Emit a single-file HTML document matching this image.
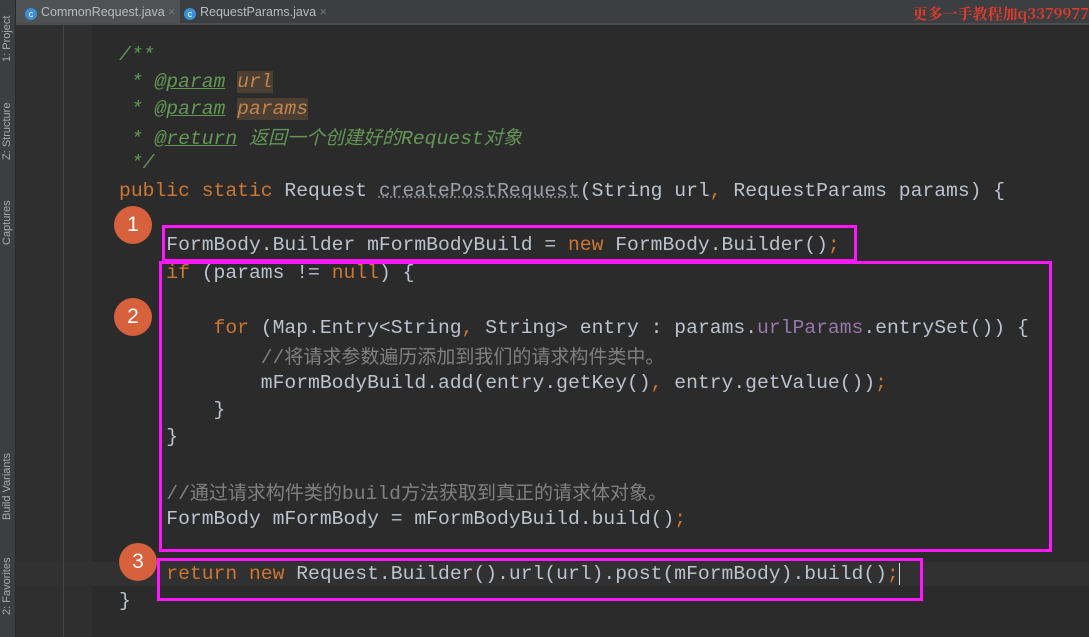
<!DOCTYPE html>
<html><head><meta charset="utf-8"><style>
body{margin:0;width:1089px;height:637px;background:#2b2b2b;overflow:hidden;position:relative;font-family:"Liberation Mono","Noto Sans CJK SC",monospace;}
.strip{position:absolute;left:0;top:0;width:15px;height:637px;background:#3c3f41;border-right:1px solid #2a2a2a}
.tabs{position:absolute;left:16px;top:0;right:0;height:23px;background:#3c3f41;border-bottom:2px solid #4b4e50}
.tab{position:absolute;top:0;height:23px;font:12.5px "Liberation Sans",sans-serif;color:#bbb;line-height:24px;white-space:nowrap}
.tab.act{background:#4e5254}
.ci{display:inline-block;width:12px;height:12px;border-radius:50%;background:#3d8fd6;color:#fff;font-size:9px;line-height:12px;text-align:center;vertical-align:-1px;margin-right:4px}
.gutter{position:absolute;left:16px;top:25px;width:76px;height:612px;background:#2f2f2f}
.gl{position:absolute;left:63px;top:25px;width:1px;height:612px;background:#444}
.hl{position:absolute;left:16px;top:562px;width:1073px;height:24px;background:#313131}
.ln{position:absolute;left:119px;height:27px;line-height:27px;font-size:19.7px;color:#bcc3cd;white-space:pre}
.k{color:#cc7832}.c{color:#808080}.j{color:#629755;font-style:italic}.jt{color:#629755;font-style:italic;text-decoration:underline}
.p{color:#9876aa}.jp{color:#c4834a;font-style:italic;background:#4a3f32}
.cj{font-family:"Noto Sans CJK SC",sans-serif;font-size:19px}
.box{position:absolute;border:3px solid #ff18ff}
.num{position:absolute;width:38px;height:38px;border-radius:50%;background:#d6613c;color:#fff;font:21px "Liberation Sans",sans-serif;text-align:center;line-height:38px}
.side{position:absolute;left:-2px;font:11px "Liberation Sans",sans-serif;color:#aaa;transform:rotate(-90deg);transform-origin:left top;white-space:nowrap}
</style></head><body>
<div class="strip"></div>
<div class="side" style="top:62px;left:1px">1: Project</div>
<div class="side" style="top:160px;left:1px">Z: Structure</div>
<div class="side" style="top:245px;left:1px">Captures</div>
<div class="side" style="top:520px;left:1px">Build Variants</div>
<div class="side" style="top:615px;left:1px">2: Favorites</div>
<div class="tabs">
<div class="tab act" style="left:0;width:155px;padding-left:9px"><span class="ci">c</span>CommonRequest.java <span style="color:#777">×</span></div>
<div class="tab" style="left:168px;width:160px"><span class="ci">c</span>RequestParams.java <span style="color:#777">×</span></div>
<div style="position:absolute;right:0;top:3px;font:bold 15px 'Noto Serif CJK SC',serif;color:#e03a2a">更多一手教程加q3379977</div>
</div>
<div class="gutter"></div>
<div class="hl"></div>
<div class="gl"></div>

<div class="ln" style="top:42px"><span class="j">/**</span></div>
<div class="ln" style="top:69px"><span class="j"> * <span class="jt">@param</span> </span><span class="jp">url</span></div>
<div class="ln" style="top:96px"><span class="j"> * <span class="jt">@param</span> </span><span class="jp">params</span></div>
<div class="ln" style="top:123px"><span class="j"> * <span class="jt">@return</span> <span class="cj">返回一个创建好的</span>Request<span class="cj">对象</span></span></div>
<div class="ln" style="top:150px"><span class="j"> */</span></div>
<div class="ln" style="top:178px"><span class="k">public static </span>Request <span style="color:#9aa0a8;text-decoration:underline dotted #777">createPostRequest</span>(String url<span class="k">, </span>RequestParams params) {</div>
<div class="ln" style="top:232px">    FormBody.Builder mFormBodyBuild = <span class="k">new </span>FormBody.Builder()<span class="k">;</span></div>
<div class="ln" style="top:260px">    <span class="k">if </span>(params != <span class="k">null</span>) {</div>
<div class="ln" style="top:315px">        <span class="k">for </span>(Map.Entry&lt;String<span class="k">, </span>String&gt; entry : params.<span class="p">urlParams</span>.entrySet()) {</div>
<div class="ln" style="top:342px">            <span class="c">//<span class="cj">将请求参数遍历添加到我们的请求构件类中。</span></span></div>
<div class="ln" style="top:370px">            mFormBodyBuild.add(entry.getKey()<span class="k">, </span>entry.getValue())<span class="k">;</span></div>
<div class="ln" style="top:397px">        }</div>
<div class="ln" style="top:424px">    }</div>
<div class="ln" style="top:478px">    <span class="c">//<span class="cj">通过请求构件类的</span>build<span class="cj">方法获取到真正的请求体对象。</span></span></div>
<div class="ln" style="top:506px">    FormBody mFormBody = mFormBodyBuild.build()<span class="k">;</span></div>
<div class="ln" style="top:561px">    <span class="k">return new </span>Request.Builder().url(url).post(mFormBody).build()<span class="k">;</span><span style="border-left:1px solid #ddd"></span></div>
<div class="ln" style="top:588px">}</div>

<div class="box" style="left:162px;top:225px;width:689px;height:31px"></div>
<div class="box" style="left:159px;top:261px;width:887px;height:285px"></div>
<div class="box" style="left:157px;top:558px;width:760px;height:37px"></div>
<div class="num" style="left:114px;top:206px">1</div>
<div class="num" style="left:114px;top:298px">2</div>
<div class="num" style="left:119px;top:543px">3</div>
</body></html>
